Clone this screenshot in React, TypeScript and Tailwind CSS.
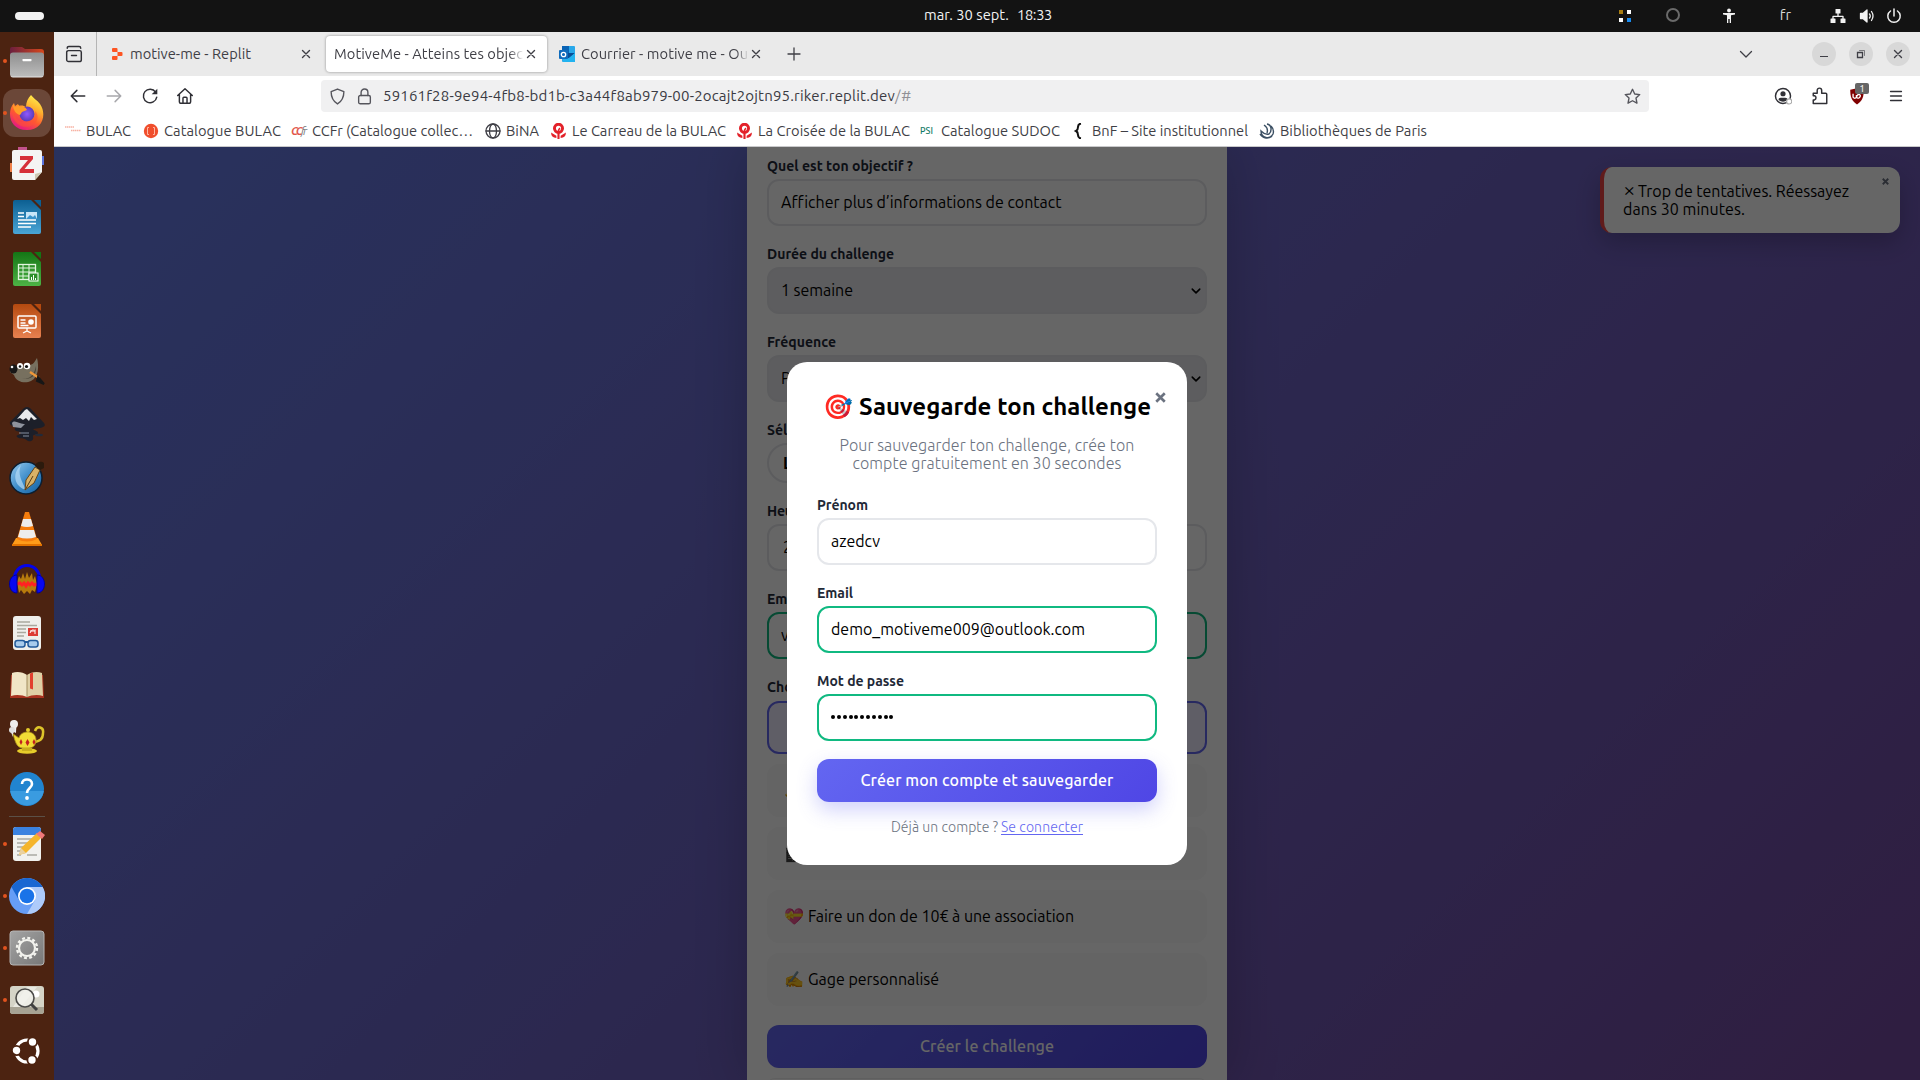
import React, { useLayoutEffect, useRef, useState } from "react";

/* Text set to a known advance width by adjusting its letter spacing. */
function T({ w, className = "", children }: { w: number; className?: string; children: string }) {
  const ref = useRef<HTMLSpanElement>(null);
  const [ls, setLs] = useState(0);
  useLayoutEffect(() => {
    if (ref.current) setLs((w - ref.current.getBoundingClientRect().width) / children.length);
  }, []);
  return (
    <span ref={ref} className={"inline-block whitespace-pre " + className} style={{ letterSpacing: ls }}>
      {children}
    </span>
  );
}

type SvgProps = { size?: number; className?: string; children: React.ReactNode; box?: string };
const Svg = ({ size = 36, className = "", children, box = "0 0 36 36" }: SvgProps) => (
  <svg width={size} height={size} viewBox={box} fill="none" className={"shrink-0 " + className}>{children}</svg>
);
const Line = ({ size = 16, className = "", children }: SvgProps) => (
  <svg width={size} height={size} viewBox="0 0 16 16" fill="none" stroke="currentColor" strokeWidth={1.3} strokeLinecap="round" strokeLinejoin="round" className={"shrink-0 " + className}>{children}</svg>
);

const Files = () => (
  <Svg>
    <defs><linearGradient id="fb" x2="1"><stop stopColor="#6b1f3e" /><stop offset="1" stopColor="#d8481c" /></linearGradient>
      <linearGradient id="ff" x2="0" y2="1"><stop stopColor="#8e8e8e" /><stop offset="1" stopColor="#bdbdbd" /></linearGradient></defs>
    <path d="M1 6a2 2 0 0 1 2-2h10l3 2h16a3 3 0 0 1 3 3v11H1z" fill="url(#fb)" />
    <rect x="1" y="9.500" width="34" height="24.500" rx="3" fill="url(#ff)" />
    <path d="M2 33q0 1 2 1h28q2 0 2-1" stroke="#e5e5e5" />
    <rect x="13.500" y="16" width="9" height="2.200" rx=".6" fill="#fff" />
  </Svg>
);
const Firefox = () => (
  <Svg>
    <defs><linearGradient id="fx" x1=".8" y1="0" x2=".3" y2="1"><stop stopColor="#fff44f" /><stop offset=".35" stopColor="#ffb02e" /><stop offset=".65" stopColor="#ff5a30" /><stop offset="1" stopColor="#e31587" /></linearGradient>
      <radialGradient id="fp"><stop stopColor="#9059ff" /><stop offset="1" stopColor="#5a3bb8" /></radialGradient></defs>
    <path d="M22 0c2 3 6 5 9 9 7 10 3 26-13 26C6 35 1 27 1 19c0-4 1-8 4-11l1 3 3-2 1 2c3-1 5 0 7 1 0-5 2-9 5-12z" fill="url(#fx)" />
    <circle cx="18" cy="19" r="7.500" fill="url(#fp)" />
    <path d="M4 14c1 10 8 15 15 12 5-1 8-5 7-10 4 4 3 10-1 13-6 5-15 3-19-3-3-4-3-8-2-12z" fill="#ff5136" opacity=".55" />
    <path d="M4 9l2 3 4-2 1 2c3-1 6 0 7 3l-5 2c-1 2-2 3-2 3-4-1-7-5-7-11z" fill="#ff9d28" />
  </Svg>
);
const Zotero = () => (
  <Svg>
    <rect x="9" y="0" width="9" height="6" fill="#c2528b" /><rect x="28" y="9" width="7" height="9" fill="#5a74dd" /><rect x="1" y="16" width="6" height="9" fill="#f08048" />
    <path d="M5 3h26a2 2 0 0 1 2 2v20l-7 8H5a2 2 0 0 1-2-2V5a2 2 0 0 1 2-2z" fill="#f4f4f4" />
    <path d="M33 25l-7 8v-6z" fill="#cfc9b5" />
    <path d="M11 9h13v3L15.500 22H25v4H10.500v-3L19 13h-8z" fill="#d6303a" />
  </Svg>
);
const Office = ({ id, a, b, children }: { id: string; a: string; b: string; children: React.ReactNode }) => (
  <Svg>
    <defs><linearGradient id={id} x2="0" y2="1"><stop stopColor={a} /><stop offset="1" stopColor={b} /></linearGradient></defs>
    <path d="M6 1h16l10 10v22a2 2 0 0 1-2 2H6a2 2 0 0 1-2-2V3a2 2 0 0 1 2-2z" fill={`url(#${id})`} />
    <path d="M25 1h7v7z" fill={a} />
    {children}
  </Svg>
);
const Writer = () => (
  <Office id="ow" a="#0c5f92" b="#49a5d6">
    <path d="M9 14h6M9 17.500h6M9 21h18M9 24.500h18M9 28h13" stroke="#fff" strokeWidth="1.500" />
    <rect x="17" y="13" width="11" height="7" fill="#c7e5f8" /><path d="M17 20l4-4 3 2 2-2 2 4z" fill="#3893cb" />
  </Office>
);
const Calc = () => (
  <Office id="oc" a="#147515" b="#4db345">
    <rect x="9.500" y="13.500" width="17" height="15" stroke="#e3f5df" strokeWidth="1.300" />
    <path d="M9 17h18M9 21h18M9 25h18M14 13v16M20 13v16" stroke="#e3f5df" />
    <rect x="20" y="22" width="9" height="8" fill="#2d8f2a" stroke="#fff" /><path d="M22.500 29v-3M24.500 29v-5M26.500 29v-2" stroke="#fff" />
  </Office>
);
const Impress = () => (
  <Office id="oi" a="#b4490f" b="#e88150">
    <rect x="9" y="13" width="18" height="12" rx="1" stroke="#fff" strokeWidth="1.500" />
    <path d="M11.500 17h5M11.500 20h5M11.500 22.500h8M18 25v3M14 30l4-2 4 2" stroke="#fff" strokeWidth="1.300" /><circle cx="22" cy="19" r="2.800" fill="#fff" />
  </Office>
);
const Gimp = () => (
  <Svg>
    <path d="M2 11l7 0c4 1 8 0 12-1 4-1 5-4 7-7 2 8 2 19-6 23-6 3-15 1-17-6l-4-3z" fill="#77705f" />
    <path d="M13 23c7 2 12-2 14-12 1 9-5 15-14 12z" fill="#4b463b" />
    <ellipse cx="4.500" cy="14" rx="4" ry="4.500" fill="#171717" /><circle cx="3" cy="12" r="1.300" fill="#eee" />
    <circle cx="11" cy="11" r="3" fill="#fff" /><circle cx="18" cy="11" r="3.300" fill="#fff" /><circle cx="11" cy="11.500" r="1.300" fill="#111" /><circle cx="17.500" cy="11.500" r="1.600" fill="#111" />
    <path d="M21 17l9 6" stroke="#ef983a" strokeWidth="2.200" /><path d="M29 22l6 7-7-3z" fill="#171717" stroke="#171717" strokeWidth="2" />
  </Svg>
);
const Inkscape = () => (
  <Svg>
    <path d="M18 0c2 0 3 1 4 2l13 14c2 3 0 4-4 5l-7 1c2 2 5 2 5 4s-5 1-5 3 1 4-2 5-4-1-6-2-6 0-8-2 4-2 4-4-5-1-6-3 1-2 0-3-6-1-5-5L14 2c1-1 2-2 4-2z" fill="#1c1f29" />
    <path d="M18 2l10 10-3 1-3-3-2 4-3-3-3 2-3-2-3 1L16 3z" fill="#e7e9ec" />
    <path d="M3 16c3-4 8 2 13 1l-4 4-8-1z" fill="#8e939d" /><ellipse cx="30" cy="28" rx="4" ry="1.300" fill="#222a38" /><path d="M10 26h10M14 29h6" stroke="#8490a0" />
  </Svg>
);
const Scribus = () => (
  <Svg>
    <defs><linearGradient id="sc" x2="1" y2="1"><stop stopColor="#9bcdf0" /><stop offset=".5" stopColor="#3e8dca" /><stop offset="1" stopColor="#145f9f" /></linearGradient></defs>
    <circle cx="17" cy="19" r="16" fill="url(#sc)" stroke="#0c1e30" strokeWidth="1.500" />
    <path d="M12 6c-4 9 1 16 5 25-11-3-15-16-5-25z" fill="#b5dcf6" opacity=".7" />
    <path d="M16 31l1-10 9-13 5 3-6 13z" fill="#d8b167" stroke="#654417" /><path d="M26 7c1-5 7-5 9-3v5l-4 2z" fill="#2b1a0d" /><path d="M16 31l8-14" stroke="#5a3d16" />
  </Svg>
);
const Vlc = () => (
  <Svg>
    <path d="M7 27h22l4 7H3z" fill="#ff9c1a" /><path d="M3 33h30v2H3z" fill="#e37300" />
    <path d="M16 1h4l8 27q-10 5-20 0z" fill="#f57c0d" />
    <path d="M14 8h8l2 7q-6 2-12 0zM11 19h14l2 7q-9 3-18 0z" fill="#ededed" />
  </Svg>
);
const Audacity = () => (
  <Svg>
    <path d="M8 19l2-6 2 3 2-6 2 6 2-7 2 6 3-5 1 7 2-4 2 8-2 8-3-2-2 4-3-3-3 3-3-4-2 3z" fill="#b87b0c" />
    <path d="M8 21l3-1 2 2 2-2 2 3 2-3 2 2 2-2 2 2 3-1" stroke="#f22" strokeWidth="3" />
    <path d="M5 19C4-3 32-3 31 19" stroke="#0404e8" strokeWidth="3" />
    <path d="M8 12c-10 0-10 18 0 18zM28 12c10 0 10 18 0 18z" fill="#0808f0" stroke="#00009a" />
  </Svg>
);
const Viewer = () => (
  <Svg>
    <rect x="4" y="1" width="28" height="34" rx="3" fill="#efefec" />
    <path d="M8 7h13M8 10.500h20M8 14h9M8 17.500h9M8 21h7" stroke="#aaa99f" strokeWidth="1.300" />
    <rect x="19" y="13" width="10" height="8" fill="#dc3b34" /><path d="M21 18c2-5 4-2 6-3M21 16h5v3" stroke="#fff" />
    <rect x="6" y="25.500" width="10" height="6.500" rx="2.500" fill="#a8cbec" stroke="#235b9b" strokeWidth="1.500" /><rect x="19" y="25.500" width="10" height="6.500" rx="2.500" fill="#a8cbec" stroke="#235b9b" strokeWidth="1.500" /><path d="M16 27h3" stroke="#235b9b" strokeWidth="2" />
  </Svg>
);
const Book = () => (
  <Svg>
    <path d="M2 8h32l1 23H1z" fill="#a8321f" />
    <path d="M3 6c5-2 11-1 15 2v22c-4-2-11-3-16-1z" fill="#f1e6c7" /><path d="M33 6c-5-2-11-1-15 2v22c4-2 11-3 16-1z" fill="#dfd0a5" />
    <path d="M18 8v22" stroke="#a18d5f" /><path d="M21 6.500l3-1v17l-3-1z" fill="#e2402d" />
  </Svg>
);
const Lamp = () => (
  <Svg>
    <path d="M4 18L1 11l6 3c0-6 2-12-2-13" fill="#eee" /><circle cx="5" cy="5" r="4" fill="#eee" /><circle cx="3" cy="11" r="3" fill="#e0e0e0" />
    <path d="M26 12c2-6 9-4 8 2 0 7-4 8-8 9" stroke="#ddc42a" strokeWidth="2.500" />
    <path d="M4 15l6 4c1-5 6-6 9-6s8 2 8 8-4 8-7 8h-6c-7 0-8-8-10-14z" fill="#f2dc36" stroke="#b3961a" strokeWidth=".8" />
    <ellipse cx="18" cy="32" rx="10" ry="2.800" fill="#e6cc2a" /><path d="M13 29h10v3H13z" fill="#c9ad1f" /><circle cx="19" cy="11" r="2" fill="#e6cc2a" />
    <path d="M12 20l1.500 3-1.500 3-1.500-3zM18.500 20l2 3.500-2 3.500-2-3.500zM25 20l1.500 3-1.500 3-1.500-3z" fill="#c22020" />
  </Svg>
);
const Help = () => (
  <Svg>
    <circle cx="18" cy="18" r="17" fill="#2184cf" /><path d="M1.200 20h33.600a17 17 0 0 1-33.600 0z" fill="#3a9be0" />
    <path d="M13 13c0-6 10-6 10 0 0 4-5 4-5 9" stroke="#fff" strokeWidth="2.600" /><circle cx="18" cy="27" r="1.900" fill="#fff" />
  </Svg>
);
const Editor = () => (
  <Svg>
    <rect x="4" y="1" width="28" height="34" rx="3" fill="#f1f1ee" /><path d="M4 9V4a3 3 0 0 1 3-3h22a3 3 0 0 1 3 3v5z" fill="#3b82e0" />
    <path d="M8 13h17M8 17h14M8 21h10M8 25h6M8 29h4M18 29h10" stroke="#a9a9a3" strokeWidth="1.300" />
    <path d="M10 29l2-7L28 7l5 4-16 16z" fill="#f5b52b" /><path d="M27 8l4-3 5 4-3 4z" fill="#f0787a" /><path d="M10 29l2-7 5 5z" fill="#e9d1a1" />
  </Svg>
);
const Chromium = () => (
  <Svg>
    <circle cx="18" cy="18" r="18" fill="#669df6" /><path d="M18 9h15.600A18 18 0 0 0 2.500 9l7.700 13.500z" fill="#1967d2" />
    <path d="M18 9h15.600A18 18 0 0 1 18 36l7.800-13.500z" fill="#aecbfa" /><circle cx="18" cy="18" r="9" fill="#fff" /><circle cx="18" cy="18" r="7.300" fill="#1a73e8" />
  </Svg>
);
const Settings = () => (
  <Svg>
    <defs><linearGradient id="sg" x2="1" y2="1"><stop stopColor="#a4a4a4" /><stop offset="1" stopColor="#777" /></linearGradient></defs>
    <rect x="1" y="1" width="34" height="34" rx="3" fill="url(#sg)" stroke="#b5b5b5" />
    <circle cx="18" cy="18" r="10" stroke="#f3f3ee" strokeWidth="2.400" strokeDasharray="2.900 2.336" /><circle cx="18" cy="18" r="8" stroke="#f3f3ee" strokeWidth="2.200" />
  </Svg>
);
const Magnifier = () => (
  <Svg>
    <rect x="1" y="4" width="34" height="28" rx="3" fill="#d5d4c7" /><path d="M1 25h34v4a3 3 0 0 1-3 3H4a3 3 0 0 1-3-3z" fill="#a7a394" /><path d="M18 5h10L12 25H4z" fill="#e9e9e1" />
    <circle cx="27" cy="12" r="3.500" fill="#fff" /><circle cx="16" cy="16" r="9" fill="#f3f3ee" fillOpacity=".8" stroke="#4b4b49" strokeWidth="1.600" /><path d="M22 22l6 6" stroke="#404040" strokeWidth="3" />
  </Svg>
);
const Ubuntu = () => (
  <Svg className="relative -top-px">
    <circle cx="18" cy="18" r="11" stroke="#fff" strokeWidth="3.200" />
    {[[7.500, 17.500], [23.500, 9], [23, 27]].map(([x, y]) => <circle key={y} cx={x} cy={y} r="4.600" fill="#fff" stroke="#4c2311" strokeWidth="1.800" />)}
  </Svg>
);

const dockTop: [React.FC, boolean?, boolean?][] = [[Files, true], [Firefox, true, true], [Zotero], [Writer], [Calc], [Impress], [Gimp], [Inkscape], [Scribus], [Vlc], [Audacity], [Viewer], [Book], [Lamp], [Help]];
const dockBottom: [React.FC, boolean?, boolean?][] = [[Editor, true], [Chromium, true], [Settings, true], [Magnifier, true], [Ubuntu]];

const DockItem = ({ item: [Icon, running, active] }: { item: [React.FC, boolean?, boolean?] }) => (
  <div className="relative flex h-[52px] shrink-0 items-center justify-center">
    {active && <div className="absolute left-[3px] top-[2px] h-[48px] w-[48px] rounded-[12px] bg-[#6b4738]" />}
    {running && <span className="absolute left-[3px] top-6 size-1 rounded-full bg-[#e2531f]" />}
    <div className="relative"><Icon /></div>
  </div>
);

const TopBar = () => (
  <header className="relative flex h-8 items-center bg-[#131313] text-[#f2f2f2]">
    <div className="ml-[15px] h-2 w-[29px] rounded-full bg-[#f2f2f2]" />
    <div className="ml-[880px] flex gap-2 pb-px text-[14.670px] leading-none">
      <T w={85}>mar. 30 sept.</T><T w={35}>18:33</T>
    </div>
    <div className="ml-auto mr-[18px] flex items-center">
      <div className="mr-[35px] grid grid-cols-2 gap-[4px]"><i className="size-[4px] bg-[#a67c12]" /><i className="size-[4px] bg-white" /><i className="size-[4px] bg-white" /><i className="size-[4px] bg-[#1a8cf0]" /></div>
      <div className="mb-[2px] mr-[41px] size-[14px] rounded-full border-2 border-[#6a6a6a]" />
      <Line className="mr-[43px]" size={16}><g fill="currentColor" stroke="none"><circle cx="8" cy="2.500" r="1.900" /><path d="M2 5h12v1.500l-4 .7V15H8.700v-4H7.300v4H6V7.200l-4-.7z" /></g></Line>
      <span className="mr-[39px] pb-[2px] text-[14.670px] leading-none text-[#d8d8d8]">fr</span>
      <Line className="mr-[13px]"><g fill="currentColor" stroke="none"><rect x="5.500" y="1" width="5" height="4.500" rx=".6" /><rect x=".5" y="10.500" width="5" height="4.500" rx=".6" /><rect x="10.500" y="10.500" width="5" height="4.500" rx=".6" /></g><path d="M8 5v3M3 11V8.300h10V11" /></Line>
      <Line className="mr-[11px]"><path d="M1.500 5.500h2.500L8 2v12l-4-3.500H1.500z" fill="currentColor" /><path d="M10.500 6q1.500 2 0 4M12.500 3.500q3 4.500 0 9" /></Line>
      <Line><path d="M8 1v7M4.500 3a6.200 6.200 0 1 0 7 0" strokeWidth="1.500" /></Line>
    </div>
  </header>
);

const Cross = ({ size = 16 }: { size?: number }) => <Line size={size}><path d="M4.500 4.500l7 7M11.500 4.500l-7 7" strokeWidth="1.400" /></Line>;

const TabBar = () => (
  <div className="flex h-11 shrink-0 items-center bg-[#eaeaea] text-[14.670px] text-[#3f3f46]">
    <div className="flex h-full w-[43px] items-center justify-center border-r border-[#b5b5b5] pr-0.5">
      <Line size={18} className="text-[#303036]"><path d="M5.800 9.300h4.400M2 2.800q0-1.500 1.500-1.500h9q1.500 0 1.500 1.500M3 5h10a1.500 1.500 0 0 1 1.500 1.500V13a1.700 1.700 0 0 1-1.700 1.700H3.200A1.700 1.700 0 0 1 1.500 13V6.500A1.500 1.500 0 0 1 3 5z" /></Line>
    </div>
    <div className="flex w-[229px] items-center pl-[14px]">
      <Svg size={16} box="0 0 16 16" className="mr-[3px]"><path d="M1 3a1 1 0 0 1 1-1h3.500a1 1 0 0 1 1 1v3H2a1 1 0 0 1-1-1zM6.500 6H10.500a1 1 0 0 1 1 1v2a1 1 0 0 1-1 1H6.500zM1 11a1 1 0 0 1 1-1h4.500v3a1 1 0 0 1-1 1H2a1 1 0 0 1-1-1z" fill="#fd5523" /></Svg>
      <T w={121}>motive-me - Replit</T>
      <div className="ml-auto mr-[12px]"><Cross /></div>
    </div>
    <div className="flex h-9 w-[221px] items-center rounded bg-white pl-2 shadow-[0_0_3px_rgba(0,0,0,0.4)]">
      <div className="w-[190px] overflow-hidden mask-r-from-92% mask-r-to-100%"><T w={195}>MotiveMe - Atteins tes object</T></div>
      <div className="-ml-px"><Cross /></div>
    </div>
    <div className="flex w-[225px] items-center pl-3">
      <Svg size={16} box="0 0 16 16" className="mr-[6px]"><rect x="3" width="13" height="16" rx="1" fill="#28a8ea" /><path d="M3 0h7v7H3z" fill="#0a63b5" /><path d="M3 7h13l-6 5H3z" fill="#0a4f96" /><path d="M9 13l7-6v9H4v-3z" fill="#22b3f0" /><rect y="4" width="9" height="9" rx="1" fill="#0f6cbd" /><circle cx="4.500" cy="8.500" r="2.200" stroke="#fff" strokeWidth="1.300" /></Svg>
      <div className="w-[168px] overflow-hidden mask-r-from-92% mask-r-to-100%"><T w={173}>Courrier - motive me - Out</T></div>
      <div className="-ml-px"><Cross /></div>
    </div>
    <Line className="ml-[14px]"><path d="M8 2v12M2 8h12" /></Line>
    <Line className="ml-auto mr-[58px]"><path d="M2.500 5.500L8 11l5.500-5.500" /></Line>
    <div className="mr-[10px] flex gap-[13px]">
      <i className="flex size-6 items-center justify-center rounded-full bg-[#d8d8d8]"><Line><path d="M4 10.500h8" strokeLinecap="butt" strokeWidth="1" /></Line></i>
      <i className="flex size-6 items-center justify-center rounded-full bg-[#d8d8d8]"><Line><path d="M4.500 6.500h5v5h-5z" strokeLinejoin="miter" /><path d="M6.500 4.500h5v5" strokeWidth="1" strokeLinejoin="miter" opacity=".6" /></Line></i>
      <i className="flex size-6 items-center justify-center rounded-full bg-[#d8d8d8]"><Cross /></i>
    </div>
  </div>
);

const NavBar = () => (
  <div className="flex h-10 shrink-0 items-center bg-white text-[#303036]">
    <Line size={18} className="ml-[15px]"><path d="M14 8H2M7 3L2 8l5 5" /></Line>
    <Line size={18} className="ml-[18px] text-[#a8a8ac]"><path d="M2 8h12M9 3l5 5-5 5" /></Line>
    <Line size={18} className="ml-[18px]"><path d="M13 4.500A6 6 0 1 0 14 9" /><path d="M14.500 1.500v5h-5z" fill="currentColor" stroke="none" /></Line>
    <Line size={18} className="ml-[17px]"><path d="M1.500 7.500L8 1.500l6.500 6M3 6.500v6.700a1.300 1.300 0 0 0 1.300 1.300h7.400a1.300 1.300 0 0 0 1.300-1.300V6.500M6.200 14.500V10a.8.8 0 0 1 .8-.8h2a.8.8 0 0 1 .8.8v4.500" /></Line>
    <div className="ml-[127px] flex h-8 w-[1328px] items-center rounded bg-[#f0f0f1] text-[15px] text-[#3a3a42]">
      <Line size={17} className="ml-2 text-[#55555c]"><path d="M8 1L14 3.500c0 5.500-2 9-6 11.500-4-2.500-6-6-6-11.500z" /></Line>
      <Line size={17} className="ml-[10px] text-[#55555c]"><rect x="2.500" y="7" width="11" height="7.800" rx="1.500" /><path d="M4.800 7V4.200a3.200 3.200 0 0 1 6.400 0V7" /></Line>
      <div className="ml-[10px] flex"><T w={512}>59161f28-9e94-4fb8-bd1b-c3a44f8ab979-00-2ocajt2ojtn95.riker.replit.dev</T><T w={17} className="text-[#909096]">/#</T></div>
      <Line size={17} className="ml-auto mr-2 text-[#55555c]"><path d="M8 1.200l2.100 4.400 4.700.6-3.500 3.300.9 4.800L8 12l-4.200 2.300.9-4.800L1.200 6.200l4.700-.6z" /></Line>
    </div>
    <Line size={18} className="ml-auto"><circle cx="8" cy="8" r="6.700" /><circle cx="8" cy="6" r="2.300" fill="currentColor" stroke="none" /><path d="M4 11.500q0-2 2-2h4q2 0 2 2-4 3-8 0z" fill="currentColor" stroke="none" /><circle cx="13.500" cy="12.800" r="2.300" fill="#fff" stroke="#aaa" strokeWidth="1" /></Line>
    <Line size={18} className="ml-[19px]"><path d="M2 5.500h3.500V3a2 2 0 0 1 4 0v2.500H13a1 1 0 0 1 1 1v8.200H2V11.500h1.200a2 2 0 0 0 0-3.700H2z" /></Line>
    <div className="relative ml-[19px]">
      <Svg size={18} box="0 0 16 16"><path d="M8 1l6 1.500c0 6-1 10-6 13-5-3-6-7-6-13z" fill="#800000" /><path d="M4.500 6v3q1.500 2 3 0V7M7.500 9q1 1.500 2.500.500 2-2 0-3-2 0-2 2" stroke="#fff" strokeWidth="1.200" /></Svg>
      <span className="absolute -top-[4px] left-[7px] flex h-[11px] w-[14px] items-center justify-center rounded-[2px] bg-[#666] text-[10px] text-white">1</span>
    </div>
    <Line size={16} className="ml-[22px] mr-4"><path d="M2.500 3.500h11M2.500 8h11M2.500 12.500h11" /></Line>
  </div>
);

const Carreau = () => <Svg size={17} box="0 0 16 16"><circle cx="8" cy="5" r="3.800" stroke="#e3222a" strokeWidth="2.800" /><path d="M9.500 5q-2 1-1.500 5" stroke="#e3222a" strokeWidth="1.500" /><path d="M7 9h2v6H7zM1 9l5 3v2q-5 0-5-5zM15 9l-5 3v2q5 0 5-5z" fill="#e3222a" /></Svg>;
const bookmarks: { t: string; w: number; gap: string; icon: React.ReactNode }[] = [
  { t: "BULAC", w: 45, gap: "w-[78px]", icon: <Svg size={16} box="0 0 16 16"><path d="M0 4h9M6 7.500h10" stroke="#f7b3a4" strokeDasharray="1.500 .5" strokeWidth="1.600" /></Svg> },
  { t: "Catalogue BULAC", w: 117, gap: "w-[148px]", icon: <Svg size={16} box="0 0 16 16"><circle cx="8" cy="8" r="7.200" fill="#f04e2c" /><path d="M6 4.500H4.500v7H6M10 4.500h1.500v7H10" stroke="#ffb5a2" /></Svg> },
  { t: "CCFr (Catalogue collec…", w: 161, gap: "w-[194px]", icon: <span className="w-4 text-[11px] font-bold italic leading-none tracking-[-2px] text-[#e2574b]">CC<i className="font-normal text-[#777]">fr</i></span> },
  { t: "BiNA", w: 33, gap: "w-[65px]", icon: <Line size={16}><circle cx="8" cy="8" r="7" /><ellipse cx="8" cy="8" rx="3.500" ry="7" /><path d="M1 8h14" /></Line> },
  { t: "Le Carreau de la BULAC", w: 154, gap: "w-[186px]", icon: <Carreau /> },
  { t: "La Croisée de la BULAC", w: 152, gap: "w-[184px]", icon: <Carreau /> },
  { t: "Catalogue SUDOC", w: 119, gap: "w-[151px]", icon: <span className="w-4 text-[9px] font-medium leading-none text-[#117a65]">PSI</span> },
  { t: "BnF – Site institutionnel", w: 156, gap: "w-[188px]", icon: <Svg size={16} box="0 0 16 16"><path d="M10 .5Q7 1 7 4t-2 4q2 1 2 4t3 3.500" stroke="#111" strokeWidth="2" /></Svg> },
  { t: "Bibliothèques de Paris", w: 147, gap: "w-[180px]", icon: <Svg size={16} box="0 0 16 16"><path d="M8 1c5 1 5 7 2 10-3 1-6-1-8-3 0 7 9 9 12 3 1-3 0-6-2-8M5 2c3 2 4 5 3 8M1 11c3 5 9 5 12 2" stroke="#3b4f63" strokeWidth="1.400" /></Svg> },
];

const Bookmarks = () => (
  <div className="flex h-[31px] shrink-0 items-center border-b border-[#c9c9cb] bg-white pl-[11px] text-[14.670px] text-[#3f3f46]">
    {bookmarks.map((b) => (
      <div key={b.t} className={"flex shrink-0 items-center gap-[5px] " + b.gap}>
        {b.icon}<T w={b.w}>{b.t}</T>
      </div>
    ))}
  </div>
);

const Field = ({ label, w, children, border = "border-[#e5e7eb]", select }: { label: string; w: number; children?: React.ReactNode; border?: string; select?: boolean }) => (
  <div className="h-[88px] shrink-0">
    <div className="flex h-[25px] items-center pt-px text-[14px] font-[570] text-[#1f2937]"><T w={w}>{label}</T></div>
    <div className={"mt-[1px] flex h-[47px] items-center justify-between rounded-[12px] border-2 pb-[2px] pl-3 text-[16px] text-black " + border + (select ? " bg-[#e9e9ed]" : " bg-white")}>
      <span className="leading-none">{children}</span>
      {select && <Line size={10} className="mr-1 mt-[2px]"><path d="M2 5l6 6 6-6" strokeWidth="2.500" /></Line>}
    </div>
  </div>
);

const Option = ({ emoji, text, w, on }: { emoji: string; text?: string; w?: number; on?: boolean }) => (
  <div className={"mb-[10px] flex h-[53px] shrink-0 items-center gap-[4px] rounded-[12px] border-2 pb-px pl-[15px] text-[16px] text-black " + (on ? "border-[#6366f1] bg-[#eeebff]" : "border-[#fafafa] bg-[#fafafa]")}>
    <span className="w-[20px] whitespace-nowrap leading-none">{emoji}</span>{text && <T w={w!}>{text}</T>}
  </div>
);

const Page = () => (
  <main className="relative h-[933px] overflow-hidden bg-[linear-gradient(135deg,#667eea_0%,#764ba2_100%)]">
    <div className="mx-auto flex h-full w-[480px] flex-col bg-white px-5 pt-[6px] shadow-[0_0_50px_rgba(0,0,0,0.2)]">
      <Field label="Quel est ton objectif ?" w={146}><T w={280}>Afficher plus d’informations de contact</T></Field>
      <Field label="Durée du challenge" w={127} select><T w={72}>1 semaine</T></Field>
      <Field label="Fréquence" w={69} select><T w={100}>Personnalisé</T></Field>
      <div className="h-[81px] shrink-0">
        <div className="flex h-[25px] items-center pt-px text-[14px] font-[570] text-[#1f2937]">Sélec</div>
        <div className="mt-px flex h-10 w-10 items-center rounded-full border-2 border-[#e5e7eb] pl-3.5 text-[16px] font-[570]">L</div>
      </div>
      <Field label="Heure" w={39}><span className="pl-0.5">20</span></Field>
      <Field label="Email" w={36} border="border-[#10b981]">v</Field>
      <div className="flex h-[26px] shrink-0 items-center pt-px text-[14px] font-[570] text-[#1f2937]">Choix</div>
      <div className="mt-px flex shrink-0 flex-col">
        <Option emoji="🏃" on /><Option emoji="🧹" /><Option emoji="🎬" />
        <Option emoji="💝" text="Faire un don de 10€ à une association" w={266} />
        <Option emoji="✍️" text="Gage personnalisé" w={131} />
      </div>
      <div className="mt-[9px] flex h-[43px] shrink-0 items-center justify-center rounded-[12px] bg-[linear-gradient(135deg,#6366f1,#4f46e5)] pb-px text-[16px] font-[550] text-white"><T w={134}>Créer le challenge</T></div>
      <div className="mt-[10px] h-2 shrink-0 rounded-t-lg border-t border-[#eee]" />
    </div>
    <div className="absolute right-5 top-5 h-[66px] w-[300px] rounded-[12px] border-l-4 border-[#ef4444] bg-white pl-[19px] pt-[15px] text-[16px] leading-[18px] text-black shadow-[0_10px_25px_rgba(0,0,0,0.2)]">
      <div className="flex"><span className="w-[15px] text-[15px]">⨯</span><T w={211}>Trop de tentatives. Réessayez</T></div>
      <T w={122}>dans 30 minutes.</T>
      <div className="absolute right-[9px] top-[9px] text-[#6b7280]"><Line size={11}><path d="M4 4l8 8M12 4l-8 8" strokeWidth="2.600" strokeLinecap="butt" /></Line></div>
    </div>
    <div className="absolute inset-0 bg-black/60" />
    <Modal />
  </main>
);

const Modal = () => (
  <section className="absolute left-[733px] top-[215px] flex h-[503px] w-[400px] flex-col rounded-[20px] bg-white px-[30px] pt-[30px]">
    <div className="absolute right-[18px] top-[27px] text-[#6b7280]"><Line size={17}><path d="M4 4l8 8M12 4l-8 8" strokeWidth="2.500" strokeLinecap="butt" /></Line></div>
    <h2 className="ml-[6px] flex h-[29px] shrink-0 items-center gap-[7px] whitespace-nowrap text-[24px] font-[570] leading-none text-black"><span className="w-[29px]">🎯</span><T w={292}>Sauvegarde ton challenge</T></h2>
    <p className="mt-[15px] flex shrink-0 flex-col items-center text-[16px] font-light leading-[18px] text-[#6b7280]"><T w={295}>Pour sauvegarder ton challenge, crée ton</T><T w={269}>compte gratuitement en 30 secondes</T></p>
    <div className="mt-[20px]">
      <Field label="Prénom" w={51}><T w={49}>azedcv</T></Field>
      <Field label="Email" w={36} border="border-[#10b981]"><T w={254}>demo_motiveme009@outlook.com</T></Field>
      <Field label="Mot de passe" w={87} border="border-[#10b981]"><span className="flex gap-[1.850px]">{Array.from({ length: 11 }, (_, i) => <i key={i} className="size-[4px] rounded-full bg-black" />)}</span></Field>
    </div>
    <button className="mt-[3px] flex h-[43px] shrink-0 items-center justify-center rounded-[12px] bg-[linear-gradient(135deg,#6366f1,#4f46e5)] pb-px text-[16px] font-[550] text-white shadow-[0_8px_20px_rgba(99,102,241,0.3)]"><T w={253}>Créer mon compte et sauvegarder</T></button>
    <div className="mt-[15px] flex justify-center gap-[3px] text-[14px] font-light leading-5 text-[#6b7280]"><T w={107}>Déjà un compte ?</T><T w={82} className="text-[#6366f1] underline underline-offset-2">Se connecter</T></div>
  </section>
);

export default function App() {
  return (
    <div className="h-[1080px] w-[1920px] overflow-hidden bg-white font-['Ubuntu','Noto_Sans','Noto_Color_Emoji',sans-serif]">
      <TopBar />
      <div className="flex h-[1048px]">
        <aside className="flex w-[54px] shrink-0 flex-col bg-[#4c2311] pt-[3px]">
          {dockTop.map((d, i) => <DockItem key={i} item={d} />)}
          <div className="mx-[9px] mb-px mt-px h-px shrink-0 bg-[#5b5047]" />
          {dockBottom.map((d, i) => <DockItem key={i} item={d} />)}
        </aside>
        <div className="flex w-[1866px] flex-col"><TabBar /><NavBar /><Bookmarks /><Page /></div>
      </div>
    </div>
  );
}
